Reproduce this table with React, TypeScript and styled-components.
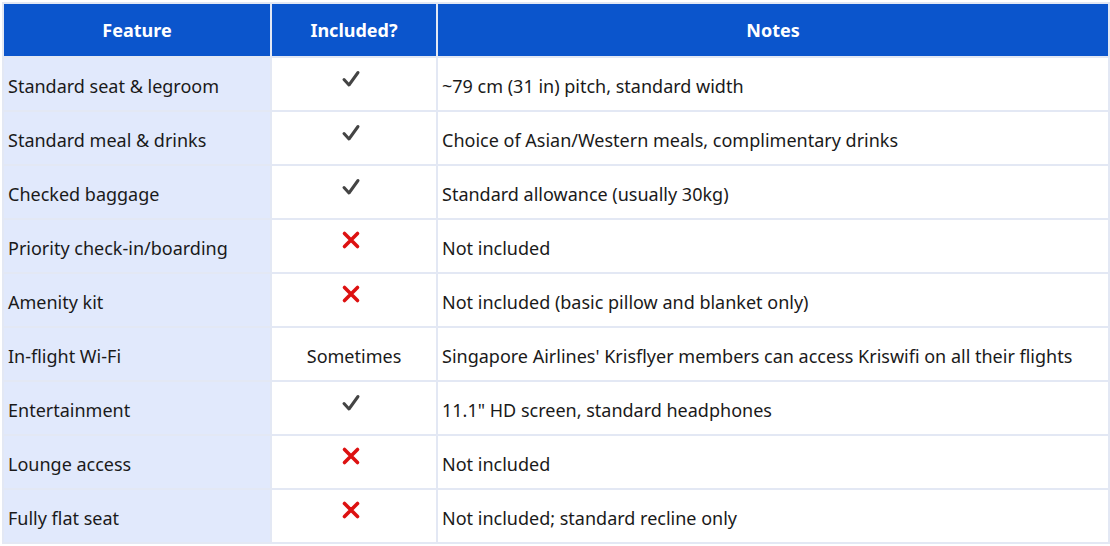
import React from "react";
import styled, { createGlobalStyle } from "styled-components";

const Global = createGlobalStyle`
  html, body { margin: 0; padding: 0; background: #ffffff; }
  body { font-family: "Noto Sans", "Open Sans", sans-serif; }
`;

const Wrap = styled.div`
  padding: 2px 0 0 2px;
`;

const Table = styled.table`
  border-collapse: collapse;
  width: 1106px;
  table-layout: fixed;
  border: 2px solid #e3e8f4;
`;

const Th = styled.th<{ $w: number }>`
  width: ${(p) => p.$w}px;
  height: 54px;
  box-sizing: border-box;
  background: #0b55cc;
  color: #ffffff;
  font-weight: 700;
  font-size: 18px;
  text-align: center;
  border: 2px solid #e3e8f4;
  padding: 0 4px;
`;

const Td = styled.td<{ $feature?: boolean; $center?: boolean }>`
  height: 54px;
  box-sizing: border-box;
  background: ${(p) => (p.$feature ? "#e1e9fc" : "#ffffff")};
  color: #1a1a1a;
  font-size: 18px;
  text-align: ${(p) => (p.$center ? "center" : "left")};
  border: 2px solid #e3e8f4;
  padding: 3px 4px 0 4px;
  white-space: nowrap;
`;

const Mark = styled.span`
  display: inline-block;
  position: relative;
  top: -6px;
  left: -3px;
  vertical-align: middle;
`;

const Check = () => (
  <Mark>
    <svg width="20" height="18" viewBox="0 0 20 18">
      <path d="M3 9.5 L8 15 L17 2.5" fill="none" stroke="#444" strokeWidth="3" strokeLinecap="round" strokeLinejoin="round" />
    </svg>
  </Mark>
);

const Cross = () => (
  <Mark>
    <svg width="20" height="20" viewBox="0 0 20 20">
      <path d="M3.5 3.5 L16.5 16.5 M16.5 3.5 L3.5 16.5" fill="none" stroke="#dd1111" strokeWidth="3.6" strokeLinecap="round" />
    </svg>
  </Mark>
);

type Row = { f: string; inc: "y" | "n" | string; n: string };

const rows: Row[] = [
  { f: "Standard seat & legroom", inc: "y", n: "~79 cm (31 in) pitch, standard width" },
  { f: "Standard meal & drinks", inc: "y", n: "Choice of Asian/Western meals, complimentary drinks" },
  { f: "Checked baggage", inc: "y", n: "Standard allowance (usually 30kg)" },
  { f: "Priority check-in/boarding", inc: "n", n: "Not included" },
  { f: "Amenity kit", inc: "n", n: "Not included (basic pillow and blanket only)" },
  { f: "In-flight Wi-Fi", inc: "Sometimes", n: "Singapore Airlines' Krisflyer members can access Kriswifi on all their flights" },
  { f: "Entertainment", inc: "y", n: "11.1\" HD screen, standard headphones" },
  { f: "Lounge access", inc: "n", n: "Not included" },
  { f: "Fully flat seat", inc: "n", n: "Not included; standard recline only" },
];

export default function App() {
  return (
    <Wrap>
      <Global />
      <Table>
        <thead>
          <tr>
            <Th $w={268}>Feature</Th>
            <Th $w={166}>Included?</Th>
            <Th $w={672}>Notes</Th>
          </tr>
        </thead>
        <tbody>
          {rows.map((r) => (
            <tr key={r.f}>
              <Td $feature>{r.f}</Td>
              <Td $center>
                {r.inc === "y" ? <Check /> : r.inc === "n" ? <Cross /> : r.inc}
              </Td>
              <Td>{r.n}</Td>
            </tr>
          ))}
        </tbody>
      </Table>
    </Wrap>
  );
}
